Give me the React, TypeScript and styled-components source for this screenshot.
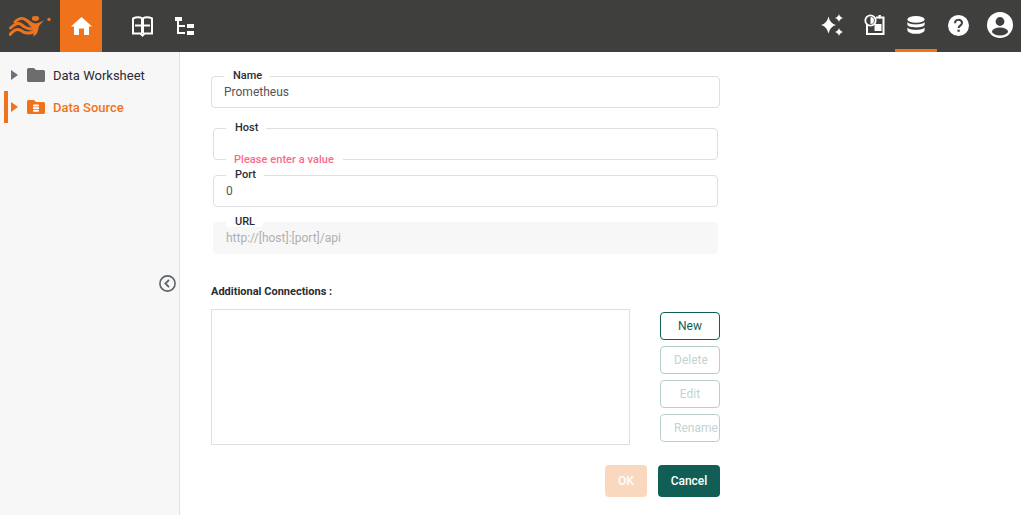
import React from 'react'
import styled, { createGlobalStyle } from 'styled-components'

const GlobalStyle = createGlobalStyle`
	html, body {
		margin: 0;
		height: 100%;
		overflow: hidden;
		background: #fff;
		font-family: Roboto, "Liberation Sans", sans-serif;
	}
`

const Page = styled.div`
	width: 1021px;
	height: 515px;
	display: flex;
	flex-direction: column;
`

const Header = styled.header`
	height: 52px;
	flex: none;
	background: #3f3f3d;
	display: flex;
	align-items: stretch;
`

const LogoBox = styled.div`
	width: 60px;
	display: flex;
	align-items: center;
	padding-left: 9px;
	box-sizing: border-box;
`

const HomeTab = styled.div`
	width: 42px;
	background: #f0731c;
	display: flex;
	align-items: center;
	justify-content: center;
`

const LeftIcons = styled.div`
	display: flex;
	align-items: center;
	gap: 22px;
	padding-left: 30px;
`

const RightIcons = styled.div`
	margin-left: auto;
	display: flex;
	align-items: stretch;
`

const IconTab = styled.div<{ $active?: boolean }>`
	width: 42px;
	display: flex;
	align-items: center;
	justify-content: center;
	box-sizing: border-box;
	border-bottom: 3px solid ${p => (p.$active ? '#f0731c' : 'transparent')};
	padding-top: 1px;
`

const Body = styled.div`
	flex: 1;
	display: flex;
	min-height: 0;
`

const Sidebar = styled.aside`
	width: 180px;
	flex: none;
	box-sizing: border-box;
	background: #f7f7f7;
	border-right: 1px solid #e0e0e0;
	padding-top: 7px;
	position: relative;
`

const TreeRow = styled.div<{ $active?: boolean }>`
	height: 32px;
	display: flex;
	align-items: center;
	margin-left: ${p => (p.$active ? '4px' : '0')};
	padding-left: ${p => (p.$active ? '3px' : '11px')};
	border-left: ${p => (p.$active ? '4px solid #f0731c' : '0')};
	color: ${p => (p.$active ? '#f0731c' : '#2b2b33')};
	font-size: 13px;
	font-weight: ${p => (p.$active ? 500 : 400)};
`

const Caret = styled.span<{ $active?: boolean }>`
	width: 0;
	height: 0;
	margin-right: 9px;
	border-left: 7px solid ${p => (p.$active ? '#f0731c' : '#6b7079')};
	border-top: 5px solid transparent;
	border-bottom: 5px solid transparent;
`

const TreeLabel = styled.span`
	margin-left: 8px;
`

const Collapse = styled.div`
	position: absolute;
	left: 159px;
	top: 223px;
	width: 17px;
	height: 17px;
`

const Main = styled.main`
	flex: none;
	width: 509px;
	margin-left: 31px;
	padding-top: 24px;
	display: flex;
	flex-direction: column;
`

const Field = styled.div<{ $inset?: boolean; $gap: number; $disabled?: boolean }>`
	position: relative;
	box-sizing: border-box;
	height: 32px;
	width: ${p => (p.$inset ? '505px' : '509px')};
	margin: ${p => p.$gap}px 0 0 ${p => (p.$inset ? '2px' : '0')};
	border: 1px solid ${p => (p.$disabled ? '#f7f7f7' : '#dfdfdf')};
	border-radius: 4px;
	background: ${p => (p.$disabled ? '#f7f7f7' : '#fff')};
	padding: 0 0 1px 12px;
	display: flex;
	align-items: center;
	font-size: 12px;
	color: ${p => (p.$disabled ? '#b0b0b0' : '#555')};
`

const FieldLabel = styled.label<{ $disabled?: boolean }>`
	position: absolute;
	left: 12px;
	top: -8px;
	height: 14px;
	line-height: 14px;
	padding: 0 8px 0 9px;
	background: ${p => (p.$disabled ? 'linear-gradient(#fff 8px, #fff 12px, transparent 12px)' : '#fff')};
	border-radius: 0 0 6px 6px;
	font-size: 11px;
	font-weight: 500;
	color: #2c2c34;
`

const FieldError = styled.span`
	position: absolute;
	left: 12px;
	bottom: -8px;
	height: 14px;
	line-height: 14px;
	padding: 0 9px 0 8px;
	background: #fff;
	font-size: 11px;
	font-weight: 500;
	letter-spacing: 0.05px;
	color: #fb6a8a;
`

const SectionTitle = styled.div`
	margin-top: 31px;
	font-size: 11px;
	font-weight: 700;
	line-height: 13px;
	color: #2c2c34;
`

const ConnectionRow = styled.div`
	margin-top: 11px;
	display: flex;
	align-items: flex-start;
`

const ConnectionList = styled.div`
	width: 419px;
	height: 136px;
	box-sizing: border-box;
	border: 1px solid #dfdfdf;
`

const SideButtons = styled.div`
	margin: 3px 0 0 30px;
	display: flex;
	flex-direction: column;
	gap: 6px;
`

const SideButton = styled.button<{ $enabled?: boolean }>`
	width: 60px;
	height: 28px;
	box-sizing: border-box;
	padding: 0 13px;
	background: #fff;
	border: 1px solid ${p => (p.$enabled ? '#115e57' : '#b8cfcc')};
	border-radius: 4px;
	font: 400 12px Roboto, sans-serif;
	color: ${p => (p.$enabled ? '#115e57' : '#c4d3d2')};
	white-space: nowrap;
`

const Footer = styled.div`
	margin-top: 20px;
	display: flex;
	justify-content: flex-end;
	gap: 11px;
`

const OkButton = styled.button`
	width: 42px;
	height: 32px;
	border: 0;
	border-radius: 4px;
	background: #fad8bf;
	color: #fff;
	font: 500 12px Roboto, sans-serif;
`

const CancelButton = styled.button`
	width: 62px;
	height: 32px;
	border: 0;
	border-radius: 4px;
	background: #115e57;
	color: #fff;
	font: 500 12px Roboto, sans-serif;
`

function Logo() {
	return (
		<svg width="44" height="24" viewBox="0 0 44 24" fill="none">
			<g stroke="#f0731c" strokeLinecap="round" strokeWidth="3">
				<path d="M6 8 C10 4 13 3 17 6 C20 8 22 10 25 11" />
				<path d="M1.5 14 C6 10 9 8 13 11 C16 14 19 15 24 15" />
				<path d="M1 20.5 C5 16 8 14 12 16.5 C15 19 19 20 24 18" />
			</g>
			<path d="M18 7 C22 9 26 10 29 9 L35 6.5 C32 10 30 11 29.5 14 C29 18 28 21 24 22.5 C25.5 18 24 14 20 11Z" fill="#f0731c" />
			<ellipse cx="26.5" cy="4.5" rx="3.6" ry="2.4" fill="#f0731c" />
			<circle cx="40" cy="5.5" r="1.7" fill="#f0731c" />
		</svg>
	)
}

function HomeIcon() {
	return (
		<svg width="21" height="18" viewBox="0 0 21 18">
			<path d="M10.5 0 L21 9.5 H18 V18 H13 V11.5 H8 V18 H3 V9.5 H0Z" fill="#fff" />
		</svg>
	)
}

function BookIcon() {
	return (
		<svg width="21" height="21" viewBox="0 0 21 21" fill="none" stroke="#fff" strokeWidth="2">
			<path d="M1 2.5 C4 1 8 1 10.5 2.5 C13 1 17 1 20 2.5 V17.5 H12.5 L10.5 19.5 L8.5 17.5 H1Z" />
			<path d="M10.5 2.5 V17.5" strokeWidth="3" />
			<path d="M3 9.5 H18" />
		</svg>
	)
}

function TreeIcon() {
	return (
		<svg width="20" height="19" viewBox="0 0 20 19" fill="#fff">
			<rect x="0" y="0" width="7" height="4" />
			<rect x="2" y="4" width="2" height="13" />
			<rect x="2" y="8" width="8" height="2" />
			<rect x="2" y="15" width="8" height="2" />
			<rect x="12" y="7" width="7" height="4" />
			<rect x="12" y="14" width="7" height="4" />
		</svg>
	)
}

function SparkleIcon() {
	return (
		<svg width="24" height="24" viewBox="0 0 24 24" fill="#fff">
			<path d="M8.5 3.5 Q10 10.5 16 12 Q10 13.5 8.5 20.5 Q7 13.5 1 12 Q7 10.5 8.5 3.5Z" />
			<path d="M19 1 Q19.8 4.2 23.2 5 Q19.8 5.8 19 9 Q18.2 5.8 14.8 5 Q18.2 4.2 19 1Z" />
			<path d="M19 15 Q19.8 18.2 23.2 19 Q19.8 19.8 19 23 Q18.2 19.8 14.8 19 Q18.2 18.2 19 15Z" />
		</svg>
	)
}

function ScheduleIcon() {
	return (
		<svg width="21" height="22" viewBox="0 0 21 22" fill="none">
			<path d="M3 10 V20 H19.5 V3.5 H12" stroke="#fff" strokeWidth="2" />
			<rect x="10.5" y="10" width="7" height="7" fill="#fff" />
			<rect x="14.5" y="1" width="2.4" height="3.5" fill="#fff" />
			<circle cx="6.5" cy="6.5" r="5.2" stroke="#fff" strokeWidth="1.8" fill="#3f3f3d" />
			<path d="M6.5 3 V10 A3.5 3.5 0 0 0 6.5 3Z" fill="#fff" />
		</svg>
	)
}

function DatabaseIcon() {
	return (
		<svg width="18" height="18" viewBox="0 0 18 18" fill="#fff">
			<ellipse cx="9" cy="3.4" rx="8.6" ry="3.4" />
			<path d="M0.4 6 C2 9.2 16 9.2 17.6 6 V9 C16 12.2 2 12.2 0.4 9Z" />
			<path d="M0.4 11.6 C2 14.8 16 14.8 17.6 11.6 V14.4 C16 18.9 2 18.9 0.4 14.4Z" />
		</svg>
	)
}

function HelpIcon() {
	return (
		<svg width="21" height="21" viewBox="0 0 21 21">
			<circle cx="10.5" cy="10.5" r="10.5" fill="#fff" />
			<path d="M7 8.2 C7 3.8 14 3.8 14 8 C14 10.6 10.6 10.6 10.6 13" fill="none" stroke="#3f3f3d" strokeWidth="2" />
			<rect x="9.5" y="14.6" width="2.2" height="2.2" fill="#3f3f3d" />
		</svg>
	)
}

function UserIcon() {
	return (
		<svg width="26" height="26" viewBox="0 0 26 26">
			<circle cx="13" cy="13" r="13" fill="#fff" />
			<circle cx="13" cy="9.5" r="4.4" fill="#3f3f3d" />
			<ellipse cx="13" cy="19.5" rx="8" ry="4" fill="#3f3f3d" />
		</svg>
	)
}

function FolderIcon({ active }: { active?: boolean }) {
	const color = active ? '#f0731c' : '#6d6d6d'
	return (
		<svg width="18" height="14" viewBox="0 0 18 14">
			<path d="M1.5 0 H7 L9 2 H16.5 A1.5 1.5 0 0 1 18 3.5 V12.5 A1.5 1.5 0 0 1 16.5 14 H1.5 A1.5 1.5 0 0 1 0 12.5 V1.5 A1.5 1.5 0 0 1 1.5 0Z" fill={color} />
			{active && (
				<g fill="#fff">
					<rect x="6" y="4.5" width="6" height="2" rx="1" />
					<rect x="6" y="7.2" width="6" height="1.8" />
					<rect x="6" y="9.7" width="6" height="2" rx="1" />
				</g>
			)}
		</svg>
	)
}

function CollapseIcon() {
	return (
		<svg width="17" height="17" viewBox="0 0 17 17" fill="none" stroke="#5d6468" strokeWidth="1.6">
			<circle cx="8.5" cy="8.5" r="7.6" />
			<path d="M10 4.8 L6.4 8.5 L10 12.2" strokeWidth="1.8" />
		</svg>
	)
}

export default function App() {
	return (
		<Page>
			<GlobalStyle />
			<Header>
				<LogoBox>
					<Logo />
				</LogoBox>
				<HomeTab>
					<HomeIcon />
				</HomeTab>
				<LeftIcons>
					<BookIcon />
					<TreeIcon />
				</LeftIcons>
				<RightIcons>
					<IconTab>
						<SparkleIcon />
					</IconTab>
					<IconTab>
						<ScheduleIcon />
					</IconTab>
					<IconTab $active>
						<DatabaseIcon />
					</IconTab>
					<IconTab>
						<HelpIcon />
					</IconTab>
					<IconTab>
						<UserIcon />
					</IconTab>
				</RightIcons>
			</Header>
			<Body>
				<Sidebar>
					<TreeRow>
						<Caret />
						<FolderIcon />
						<TreeLabel>Data Worksheet</TreeLabel>
					</TreeRow>
					<TreeRow $active>
						<Caret $active />
						<FolderIcon active />
						<TreeLabel>Data Source</TreeLabel>
					</TreeRow>
					<Collapse>
						<CollapseIcon />
					</Collapse>
				</Sidebar>
				<Main>
					<Field $gap={0}>
						<FieldLabel>Name</FieldLabel>
						Prometheus
					</Field>
					<Field $inset $gap={20}>
						<FieldLabel>Host</FieldLabel>
						<FieldError>Please enter a value</FieldError>
					</Field>
					<Field $inset $gap={15}>
						<FieldLabel>Port</FieldLabel>
						0
					</Field>
					<Field $inset $gap={15} $disabled>
						<FieldLabel $disabled>URL</FieldLabel>
						http://[host]:[port]/api
					</Field>
					<SectionTitle>Additional Connections :</SectionTitle>
					<ConnectionRow>
						<ConnectionList />
						<SideButtons>
							<SideButton $enabled>New</SideButton>
							<SideButton>Delete</SideButton>
							<SideButton>Edit</SideButton>
							<SideButton>Rename</SideButton>
						</SideButtons>
					</ConnectionRow>
					<Footer>
						<OkButton>OK</OkButton>
						<CancelButton>Cancel</CancelButton>
					</Footer>
				</Main>
			</Body>
		</Page>
	)
}
